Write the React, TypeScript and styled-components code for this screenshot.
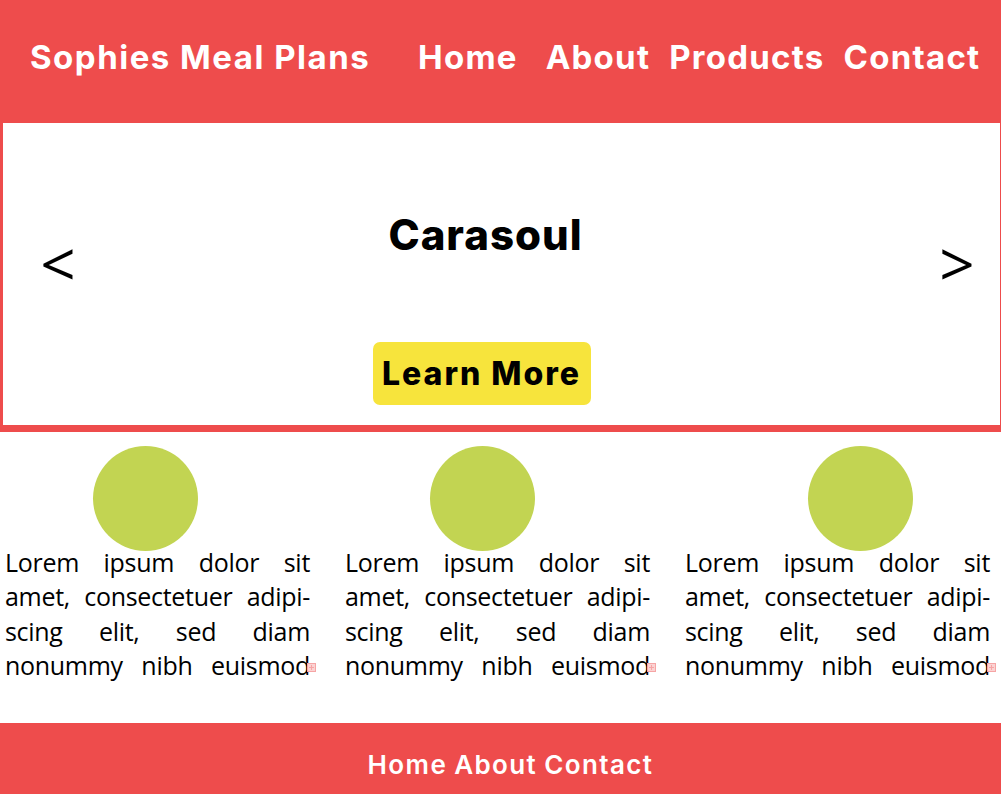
import React from 'react'
import styled, { createGlobalStyle } from 'styled-components'

const GlobalStyle = createGlobalStyle`
  html, body {
    margin: 0;
    padding: 0;
    background: #ffffff;
  }
  body {
    font-family: Inter, 'Liberation Sans', sans-serif;
  }
`

const Page = styled.div`
  width: 1001px;
  height: 794px;
  display: flex;
  flex-direction: column;
  overflow: hidden;
`

const Header = styled.header`
  height: 120px;
  flex: none;
  display: flex;
  align-items: center;
  padding: 0 0 6px 30px;
  box-sizing: border-box;
  background: #ee4c4c;
  color: #ffffff;
  font-family: Inter, sans-serif;
  font-weight: 700;
  font-size: 33px;
  letter-spacing: 1.5px;
`

const Brand = styled.div`
  width: 388px;
  flex: none;
`

const Nav = styled.nav`
  display: flex;
  align-items: center;
  gap: 19px;
  letter-spacing: 1.25px;
`

const NavLink = styled.a<{ $space?: number }>`
  color: inherit;
  text-decoration: none;
  margin-right: ${(p) => p.$space ?? 0}px;
`

const Carousel = styled.section`
  height: 312px;
  flex: none;
  box-sizing: border-box;
  border-style: solid;
  border-color: #ee4c4c;
  border-width: 3px 1px 7px 3px;
  display: flex;
  align-items: center;
  padding: 0 24px 0 36px;
`

const Arrow = styled.button`
  flex: none;
  width: 38px;
  padding: 0;
  margin-top: -22px;
  border: none;
  background: none;
  color: #000000;
  font-family: 'Open Sans', sans-serif;
  font-weight: 400;
  font-size: 62px;
  line-height: 1;
  cursor: pointer;
`

const Slide = styled.div`
  flex: 1;
  display: flex;
  flex-direction: column;
  align-items: center;
  padding: 2px 44px 0 0;
  align-self: stretch;
  justify-content: flex-start;
`

const SlideTitle = styled.h1`
  margin: 85px 0 0;
  font-family: Inter, sans-serif;
  font-weight: 800;
  font-size: 42px;
  letter-spacing: 1px;
  line-height: 50px;
  color: #000000;
`

const LearnMore = styled.button`
  margin-top: 82px;
  width: 218px;
  height: 63px;
  margin-left: -8px;
  border: none;
  border-radius: 7px;
  background: #f7e43c;
  color: #000000;
  font-family: Inter, sans-serif;
  font-weight: 800;
  font-size: 32px;
  letter-spacing: 2px;
  cursor: pointer;
`

const Features = styled.section`
  flex: 1;
  display: grid;
  grid-template-columns: repeat(3, 305px);
  column-gap: 35px;
  padding: 14px 0 0 5px;
`

const Feature = styled.article`
  display: flex;
  flex-direction: column;
`

const Dot = styled.div<{ $offset: number }>`
  width: 105px;
  height: 105px;
  border-radius: 50%;
  background: #c2d452;
  margin-left: ${(p) => p.$offset}px;
`

const Copy = styled.p`
  position: relative;
  margin: -6px 0 0;
  font-family: 'Open Sans', sans-serif;
  font-size: 25px;
  line-height: 34.3px;
  letter-spacing: -0.3px;
  color: #000000;
`

const Line = styled.span`
  display: block;
  text-align: justify;
  text-align-last: justify;
  white-space: nowrap;
`

const Overflow = styled.span`
  position: absolute;
  right: -6px;
  bottom: 10px;
  width: 9px;
  height: 9px;
  box-sizing: border-box;
  border: 1px solid #f6a5a5;
  background:
    linear-gradient(#f6a5a5, #f6a5a5) center / 5px 1px no-repeat,
    linear-gradient(#f6a5a5, #f6a5a5) center / 1px 5px no-repeat,
    #fbd3d3;
`

const Footer = styled.footer`
  height: 71px;
  flex: none;
  display: flex;
  align-items: center;
  justify-content: center;
  padding: 12px 0 0 20px;
  box-sizing: border-box;
  background: #ee4c4c;
  color: #ffffff;
  font-family: Inter, sans-serif;
  font-weight: 600;
  font-size: 26px;
  letter-spacing: 1.4px;
  word-spacing: -1px;
`

const lines = [
  'Lorem ipsum dolor sit',
  'amet, consectetuer adipi-',
  'scing elit, sed diam',
  'nonummy nibh euismod',
]

const offsets = [88, 85, 123]

export default function App() {
  return (
    <>
      <GlobalStyle />
      <Page>
        <Header>
          <Brand>Sophies Meal Plans</Brand>
          <Nav>
            <NavLink href="#" $space={9}>Home</NavLink>
            <NavLink href="#">About</NavLink>
            <NavLink href="#">Products</NavLink>
            <NavLink href="#">Contact</NavLink>
          </Nav>
        </Header>

        <Carousel>
          <Arrow aria-label="Previous">&lt;</Arrow>
          <Slide>
            <SlideTitle>Carasoul</SlideTitle>
            <LearnMore>Learn More</LearnMore>
          </Slide>
          <Arrow aria-label="Next">&gt;</Arrow>
        </Carousel>

        <Features>
          {offsets.map((offset, i) => (
            <Feature key={i}>
              <Dot $offset={offset} />
              <Copy>
                {lines.map((line) => (
                  <Line key={line}>{line}</Line>
                ))}
                <Overflow />
              </Copy>
            </Feature>
          ))}
        </Features>

        <Footer>Home About Contact</Footer>
      </Page>
    </>
  )
}
